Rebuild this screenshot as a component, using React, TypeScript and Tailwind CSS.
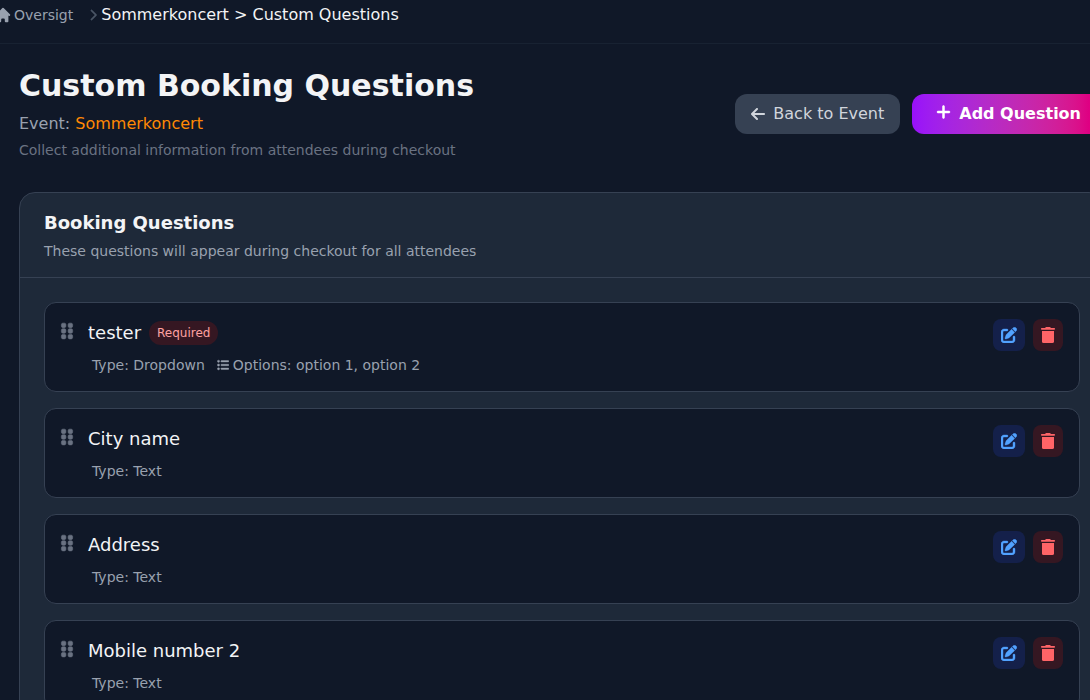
import React from 'react'
import {
  FaArrowLeft,
  FaChevronRight,
  FaGripVertical,
  FaListUl,
  FaPenToSquare,
  FaPlus
} from 'react-icons/fa6'
import { HiHome } from 'react-icons/hi'

interface Question {
  id: number
  label: string
  type: string
  required?: boolean
  options?: string[]
}

const questions: Question[] = [
  { id: 1, label: 'tester', type: 'Dropdown', required: true, options: ['option 1', 'option 2'] },
  { id: 2, label: 'City name', type: 'Text' },
  { id: 3, label: 'Address', type: 'Text' },
  { id: 4, label: 'Mobile number 2', type: 'Text' }
]

function TrashIcon() {
  return (
    <svg viewBox="0 0 14 16" fill="currentColor" className="h-4 w-3.5" aria-hidden="true">
      <path d="M4.4 0.5Q4.7 0 5.3 0h3.4q.6 0 .9.5l.3.6h3.4q.7 0 .7.7v.3q0 .7-.7.7H.7Q0 2.8 0 2.1v-.3q0-.7.7-.7h3.4z" />
      <path d="M1 4h12v10.4q0 1.6-1.6 1.6H2.6Q1 16 1 14.4z" />
    </svg>
  )
}

function Breadcrumb() {
  return (
    <nav aria-label="Breadcrumb" className="flex h-11 items-start border-b border-gray-800/60 pt-[3px]">
      <a href="#" className="-ml-1.5 flex h-6 items-center text-sm text-gray-400">
        <HiHome className="mr-0.5 h-[18px] w-[18px]" />
        Oversigt
      </a>
      <FaChevronRight className="mr-0.5 mt-1.5 ml-3.5 h-3 w-3 stroke-current stroke-[16px] text-gray-600" />
      <span className="text-base text-gray-100">Sommerkoncert &gt; Custom Questions</span>
    </nav>
  )
}

function QuestionCard({ question }: { question: Question }) {
  return (
    <li className="flex items-start justify-between rounded-xl border border-gray-700 bg-gray-900 p-4">
      <div>
        <div className="flex h-7 items-center">
          <FaGripVertical className="-ml-[3px] mr-3 mb-1 h-[18px] w-[18px] stroke-current stroke-[16px] text-gray-500" />
          <h3 className="text-lg text-gray-100">{question.label}</h3>
          {question.required && (
            <span className="ml-2 rounded-full bg-[#351722] px-2 py-1 text-xs text-red-300">Required</span>
          )}
        </div>
        <div className="mt-2 ml-[31px] flex gap-3 text-sm text-gray-400">
          <span>Type: {question.type}</span>
          {question.options && (
            <span className="flex items-center">
              <FaListUl className="mr-1 h-3 w-3 stroke-current stroke-[16px]" />
              Options: {question.options.join(', ')}
            </span>
          )}
        </div>
      </div>
      <div className="flex gap-2">
        <button aria-label={`Edit ${question.label}`} className="rounded-lg bg-[#14204a] p-2 text-blue-400">
          <FaPenToSquare className="h-4 w-4 stroke-current stroke-[12px]" />
        </button>
        <button aria-label={`Delete ${question.label}`} className="rounded-lg bg-[#351722] p-2 text-red-400">
          <TrashIcon />
        </button>
      </div>
    </li>
  )
}

export default function App() {
  return (
    <div className="h-screen overflow-hidden bg-gray-900 font-['DejaVu_Sans',sans-serif]">
      <Breadcrumb />
      <main className="-mr-[15px] pt-6 pl-[19px]">
        <header className="mb-8 flex items-center justify-between">
          <div>
            <h1 className="text-3xl font-bold text-gray-100">Custom Booking Questions</h1>
            <p className="mt-2 text-base text-gray-400">
              Event: <span className="text-[#ff8904]">Sommerkoncert</span>
            </p>
            <p className="mt-1 text-sm text-gray-500">Collect additional information from attendees during checkout</p>
          </div>
          <div className="flex gap-3">
            <button className="flex items-center gap-2 rounded-xl bg-gray-700 px-4 py-2 text-gray-300">
              <FaArrowLeft className="h-4 w-3.5" />
              Back to Event
            </button>
            <button className="flex items-center gap-2 rounded-xl bg-linear-to-r from-purple-600 to-pink-600 px-6 py-2 font-bold text-white">
              <FaPlus className="mb-1 h-4 w-[15px] stroke-current stroke-[16px]" />
              Add Question
            </button>
          </div>
        </header>

        <section className="rounded-2xl border border-gray-700 bg-gray-800">
          <div className="border-b border-gray-700 px-6 py-4">
            <h2 className="text-lg font-bold text-gray-100">Booking Questions</h2>
            <p className="mt-1 text-sm text-gray-400">These questions will appear during checkout for all attendees</p>
          </div>
          <ul className="space-y-4 p-6">
            {questions.map((question) => (
              <QuestionCard key={question.id} question={question} />
            ))}
          </ul>
        </section>
      </main>
    </div>
  )
}
